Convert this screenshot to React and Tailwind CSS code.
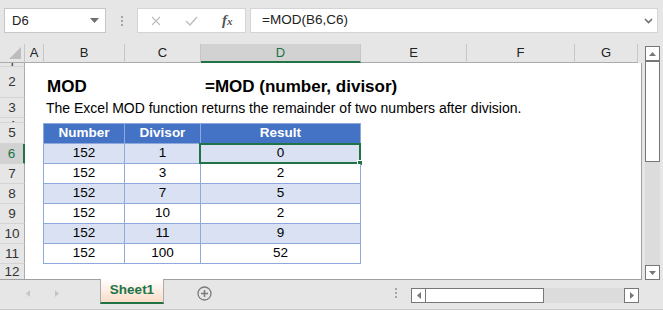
import React from 'react';

const cols = [
    { key: 'A', w: 'w-[19px]' },
    { key: 'B', w: 'w-[81px]' },
    { key: 'C', w: 'w-[76px]' },
    { key: 'D', w: 'w-[160px]' },
    { key: 'E', w: 'w-[106px]' },
    { key: 'F', w: 'w-[108px]' },
    { key: 'G', w: 'w-[63px]' },
];

const data = [
    [152, 1, 0],
    [152, 3, 2],
    [152, 7, 5],
    [152, 10, 2],
    [152, 11, 9],
    [152, 100, 52],
];

const RowHead = ({ n, h, active, top }) => (
    <div
        className={`w-[25px] shrink-0 ${h} overflow-hidden flex justify-center border-b border-[#d4d4d4] ${top ? 'items-start pt-[1px]' : 'items-center'} ${
            active ? 'bg-[#d2d2d2] text-[#217346] border-r-2 border-r-[#217346]' : 'bg-[#e6e6e6] text-[#333] border-r border-r-[#ababab]'
        }`}
    >
        <span className="leading-none">{n}</span>
    </div>
);

const TopBar = () => (
    <div className="h-[44px] shrink-0 flex items-start pt-[8px] pl-[4px] pr-[5px]">
        <div className="w-[102px] h-[25px] bg-white border border-[#c6c6c6] flex items-center justify-between pl-[7px] pr-[6px] text-[13px] text-[#222]">
            <span>D6</span>
            <svg width="9" height="5" viewBox="0 0 9 5"><path d="M0 0h9L4.5 5z" fill="#707070" /></svg>
        </div>
        <div className="w-[31px] h-[25px] flex flex-col items-center justify-center gap-[2px]">
            <span className="w-[2px] h-[2px] bg-[#a6a6a6]" />
            <span className="w-[2px] h-[2px] bg-[#a6a6a6]" />
            <span className="w-[2px] h-[2px] bg-[#a6a6a6]" />
        </div>
        <div className="w-[109px] h-[25px] bg-white border border-[#d4d4d4] flex items-center">
            <div className="w-[36px] flex justify-center">
                <svg width="10" height="10" viewBox="0 0 10 10"><path d="M1 1l8 8M9 1l-8 8" stroke="#bdbdbd" strokeWidth="1.2" /></svg>
            </div>
            <div className="w-[36px] flex justify-center">
                <svg width="13" height="10" viewBox="0 0 13 10"><path d="M1 5l4 4 7-8" stroke="#bdbdbd" strokeWidth="1.4" fill="none" /></svg>
            </div>
            <div className="w-[36px] flex justify-center items-baseline text-[#555] font-['Liberation_Serif',serif] italic font-bold">
                <span className="text-[15px]">f</span>
                <span className="text-[11px]">x</span>
            </div>
        </div>
        <div className="ml-[4px] flex-1 h-[25px] bg-white border border-[#d4d4d4] flex items-center justify-between pl-[11px] pr-[4px] text-[13.5px] text-[#222]">
            <span>=MOD(B6,C6)</span>
            <svg width="9" height="6" viewBox="0 0 9 6"><path d="M1 1l3.5 3.5L8 1" stroke="#707070" strokeWidth="1.6" fill="none" /></svg>
        </div>
    </div>
);

const ColHeaders = () => (
    <div className="h-[19px] shrink-0 flex text-[13px] text-[#222]">
        <div className="w-[25px] relative bg-[#e6e6e6] border-r border-[#c6c6c6] border-b border-b-[#ababab]">
            <svg className="absolute right-[3px] bottom-[3px]" width="12" height="12" viewBox="0 0 12 12"><path d="M12 0v12H0z" fill="#bdbdbd" /></svg>
        </div>
        {cols.map((c) => (
            <div
                key={c.key}
                className={`${c.w} flex items-center justify-center border-r border-[#c6c6c6] ${
                    c.key === 'D' ? 'bg-[#d2d2d2] text-[#217346] border-b-2 border-b-[#217346]' : 'bg-[#e6e6e6] border-b border-b-[#ababab]'
                }`}
            >
                {c.key}
            </div>
        ))}
        <div className="flex-1" />
    </div>
);

const Cell = ({ w, head, fill, children, first, top, selected }) => (
    <div
        className={`${w} relative flex items-center justify-center border-r border-b border-[#8ea9db] ${first ? 'border-l' : ''} ${top ? 'border-t' : ''} ${
            head ? 'bg-[#4472c4] text-white font-bold' : fill ? 'bg-[#d9e1f2] text-black' : 'bg-white text-black'
        }`}
    >
        {children}
        {selected && (
            <div className="absolute -left-[2px] -top-[1px] -right-[1px] -bottom-[1px] border-2 border-[#217346]">
                <div className="absolute -right-[4px] -bottom-[4px] w-[6px] h-[6px] bg-[#217346] border border-white" />
            </div>
        )}
    </div>
);

const Sheet = () => (
    <div className="w-[642px] shrink-0 flex flex-col">
        <ColHeaders />
        <div className="flex-1 flex flex-col bg-white border-r border-b border-[#a0a0a0] overflow-hidden text-[13.5px]">
            <div className="flex h-[4px]"><RowHead n={1} h="h-[4px]" /></div>
            <div className="flex h-[31px]">
                <RowHead n={2} h="h-[31px]" />
                <div className="flex-1 flex items-end pb-[3px] font-bold text-[17px] text-black leading-none">
                    <span className="ml-[22px] w-[158px]">MOD</span>
                    <span>=MOD (number, divisor)</span>
                </div>
            </div>
            <div className="flex h-[20px]">
                <RowHead n={3} h="h-[20px]" />
                <div className="flex-1 flex items-center pl-[21px] whitespace-nowrap text-[14px] text-black">
                    The Excel MOD function returns the remainder of two numbers after division.
                </div>
            </div>
            <div className="flex h-[5px]"><RowHead n={4} h="h-[5px]" top /></div>
            <div className="flex h-[21px]">
                <RowHead n={5} h="h-[21px]" />
                <div className="w-[18px]" />
                <Cell w="w-[82px]" head first top>Number</Cell>
                <Cell w="w-[76px]" head top>Divisor</Cell>
                <Cell w="w-[160px]" head top>Result</Cell>
            </div>
            {data.map((r, i) => (
                <div key={i} className="flex h-[20px]">
                    <RowHead n={6 + i} h="h-[20px]" active={i === 0} />
                    <div className="w-[18px]" />
                    <Cell w="w-[82px]" fill={i % 2 === 0} first>{r[0]}</Cell>
                    <Cell w="w-[76px]" fill={i % 2 === 0}>{r[1]}</Cell>
                    <Cell w="w-[160px]" fill={i % 2 === 0} selected={i === 0}>{r[2]}</Cell>
                </div>
            ))}
            <div className="flex h-[20px]"><RowHead n={12} h="h-[20px]" top /></div>
        </div>
    </div>
);

const VScroll = () => (
    <div className="ml-[3px] w-[15px] flex flex-col pt-[2px] pb-[0px]">
        <div className="h-[15px] bg-white border border-[#777] flex items-center justify-center">
            <svg width="7" height="4" viewBox="0 0 7 4"><path d="M0 4h7L3.5 0z" fill="#777" /></svg>
        </div>
        <div className="h-[102px] bg-white border border-[#777] border-t-2 -mt-px" />
        <div className="flex-1 bg-[#dcdcdc]" />
        <div className="h-[15px] bg-white border border-[#777] flex items-center justify-center">
            <svg width="7" height="4" viewBox="0 0 7 4"><path d="M0 0h7L3.5 4z" fill="#777" /></svg>
        </div>
    </div>
);

const BottomBar = () => (
    <div className="h-[30px] shrink-0 flex items-start border-b border-[#c8c8c8]">
        <div className="w-[100px] h-[26px] flex items-center">
            <svg className="ml-[26px]" width="4" height="7" viewBox="0 0 4 7"><path d="M4 0v7L0 3.5z" fill="#c6c6c6" /></svg>
            <svg className="ml-[25px]" width="4" height="7" viewBox="0 0 4 7"><path d="M0 0v7L4 3.5z" fill="#c6c6c6" /></svg>
        </div>
        <div className="w-[64px] h-[25px] -mt-px flex items-center justify-center border-x border-[#ababab] border-b-2 border-b-[#217346] bg-gradient-to-b from-white to-[#f8dcc8] text-[#217346] font-bold text-[13.5px]">
            Sheet1
        </div>
        <div className="h-[26px] flex items-center ml-[33px]">
            <svg width="15" height="15" viewBox="0 0 15 15">
                <circle cx="7.5" cy="7.5" r="6.5" stroke="#7a7a7a" strokeWidth="1.3" fill="none" />
                <path d="M7.5 4v7M4 7.5h7" stroke="#7a7a7a" strokeWidth="1.5" />
            </svg>
        </div>
        <div className="ml-[183px] h-[26px] flex flex-col justify-center gap-[2px]">
            <span className="w-[2px] h-[2px] bg-[#a6a6a6]" />
            <span className="w-[2px] h-[2px] bg-[#a6a6a6]" />
            <span className="w-[2px] h-[2px] bg-[#a6a6a6]" />
        </div>
        <div className="ml-[14px] mt-[8px] w-[228px] h-[15px] flex bg-[#dcdcdc]">
            <div className="w-[15px] bg-white border border-[#777] flex items-center justify-center">
                <svg width="4" height="7" viewBox="0 0 4 7"><path d="M4 0v7L0 3.5z" fill="#777" /></svg>
            </div>
            <div className="w-[119px] -ml-px bg-white border border-[#777]" />
            <div className="flex-1" />
            <div className="w-[15px] bg-white border border-[#777] flex items-center justify-center">
                <svg width="4" height="7" viewBox="0 0 4 7"><path d="M0 0v7L4 3.5z" fill="#777" /></svg>
            </div>
        </div>
    </div>
);

const App = () => {
    return (
        <div className="w-[663px] h-[310px] overflow-hidden bg-[#e6e6e6] flex flex-col font-['Liberation_Sans',Arial,sans-serif]">
            <TopBar />
            <div className="h-[236px] flex">
                <Sheet />
                <VScroll />
            </div>
            <BottomBar />
        </div>
    );
};

export default App;
